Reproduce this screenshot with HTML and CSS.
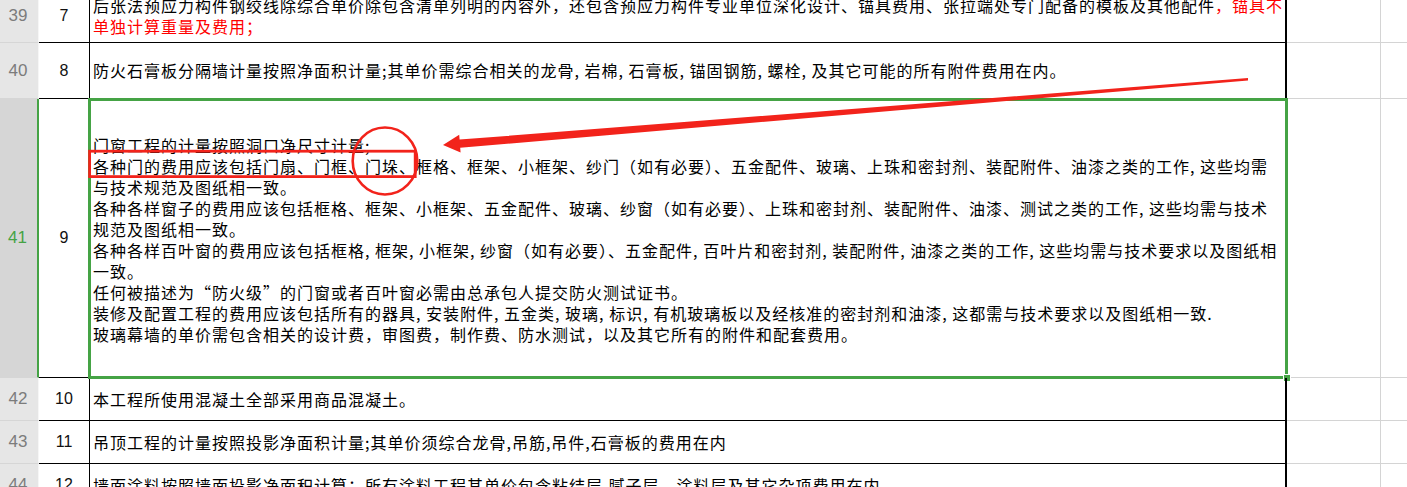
FILE: index.html
```html
<!DOCTYPE html>
<html lang="zh-CN">
<head>
<meta charset="utf-8">
<title>Sheet</title>
<link rel="stylesheet" href="styles.css">
</head>
<body>
<div class="sheet">
  <div class="row r39">
    <div class="hdr">39</div>
    <div class="num">7</div>
    <div class="txt"><div class="lines">
      <div class="ln">后张法预应力构件钢绞线除综合单价除包含清单列明的内容外，还包含预应力构件专业单位深化设计、锚具费用、张拉端处专门配备的模板及其他配件<span class="red">，锚具不</span></div>
      <div class="ln red">单独计算重量及费用；</div>
    </div></div>
    <div class="c"></div><div class="d"></div>
  </div>
  <div class="row r40">
    <div class="hdr">40</div>
    <div class="num">8</div>
    <div class="txt"><div class="lines">
      <div class="ln">防火石膏板分隔墙计量按照净面积计量;其单价需综合相关的龙骨, 岩棉, 石膏板, 锚固钢筋, 螺栓, 及其它可能的所有附件费用在内。</div>
    </div></div>
    <div class="c"></div><div class="d"></div>
  </div>
  <div class="row r41">
    <div class="hdr sel-hdr">41</div>
    <div class="num">9</div>
    <div class="txt"><div class="lines">
      <div class="ln">门窗工程的计量按照洞口净尺寸计量;</div>
      <div class="ln">各种门的费用应该包括门扇、门框、门垛、框格、框架、小框架、纱门（如有必要）、五金配件、玻璃、上珠和密封剂、装配附件、油漆之类的工作, 这些均需</div>
      <div class="ln">与技术规范及图纸相一致。</div>
      <div class="ln">各种各样窗子的费用应该包括框格、框架、小框架、五金配件、玻璃、纱窗（如有必要）、上珠和密封剂、装配附件、油漆、测试之类的工作, 这些均需与技术</div>
      <div class="ln">规范及图纸相一致。</div>
      <div class="ln">各种各样百叶窗的费用应该包括框格, 框架, 小框架, 纱窗（如有必要）、五金配件, 百叶片和密封剂, 装配附件, 油漆之类的工作, 这些均需与技术要求以及图纸相</div>
      <div class="ln">一致。</div>
      <div class="ln">任何被描述为“防火级”的门窗或者百叶窗必需由总承包人提交防火测试证书。</div>
      <div class="ln">装修及配置工程的费用应该包括所有的器具, 安装附件, 五金类, 玻璃, 标识, 有机玻璃板以及经核准的密封剂和油漆, 这都需与技术要求以及图纸相一致.</div>
      <div class="ln">玻璃幕墙的单价需包含相关的设计费，审图费，制作费、防水测试，以及其它所有的附件和配套费用。</div>
    </div>
    <div class="selection"><span class="handle"></span></div>
    </div>
    <div class="c"></div><div class="d"></div>
  </div>
  <div class="row r42">
    <div class="hdr">42</div>
    <div class="num">10</div>
    <div class="txt"><div class="lines">
      <div class="ln">本工程所使用混凝土全部采用商品混凝土。</div>
    </div></div>
    <div class="c"></div><div class="d"></div>
  </div>
  <div class="row r43">
    <div class="hdr">43</div>
    <div class="num">11</div>
    <div class="txt"><div class="lines">
      <div class="ln">吊顶工程的计量按照投影净面积计量;其单价须综合龙骨,吊筋,吊件,石膏板的费用在内</div>
    </div></div>
    <div class="c"></div><div class="d"></div>
  </div>
  <div class="row r44">
    <div class="hdr">44</div>
    <div class="num">12</div>
    <div class="txt"><div class="lines">
      <div class="ln">墙面涂料按照墙面投影净面积计算；所有涂料工程其单价包含粘结层,腻子层，涂料层及其它杂项费用在内。</div>
    </div></div>
    <div class="c"></div><div class="d"></div>
  </div>
</div>
<svg class="marks" width="1407" height="487" viewBox="0 0 1407 487" xmlns="http://www.w3.org/2000/svg">
  <rect x="89.6" y="151.2" width="325.6" height="25.4" fill="none" stroke="#f2231b" stroke-width="2.8"/>
  <ellipse cx="385" cy="161" rx="32.3" ry="33.5" fill="none" stroke="#f2231b" stroke-width="2.6"/>
  <polygon points="1248,78 459.6,139.6 459.2,134.8 443,145 460.6,152.4 460.2,147.8 1248,80.4" fill="#f2231b"/>
</svg>
</body>
</html>
```
FILE: styles.css
```css
html, body {
  margin: 0;
  padding: 0;
}
body {
  width: 1407px;
  height: 487px;
  overflow: hidden;
  position: relative;
  background: #ffffff;
  font-family: "Noto Sans CJK SC", "Noto Sans", sans-serif;
  color: #000;
}
.sheet {
  margin-top: -10px;
}
.row {
  display: flex;
}
.row > div {
  box-sizing: border-box;
  flex: none;
}
.r39 { height: 53px; }
.r40 { height: 56px; }
.r41 { height: 279px; }
.r42, .r43, .r44 { height: 43px; }

.hdr {
  width: 39px;
  background: #e6e6e6;
  border-right: 1px solid #f6f6f6;
  border-bottom: 1px solid #d6d6d6;
  display: flex;
  align-items: center;
  justify-content: center;
  font-family: "Liberation Sans", Arial, sans-serif;
  font-size: 17px;
  color: #7c7c7c;
  padding-right: 2px;
}
.sel-hdr {
  background: #d6d6d6;
  border-right: 2px solid #45a345;
  color: #45a345;
}
.num {
  width: 51px;
  border-right: 1px solid #000;
  border-bottom: 1px solid #000;
  display: flex;
  align-items: center;
  justify-content: center;
  font-family: "Liberation Sans", Arial, sans-serif;
  font-size: 16px;
  color: #111;
}
.txt {
  width: 1197px;
  border-right: 2px solid #000;
  border-bottom: 1px solid #000;
  position: relative;
  display: flex;
  align-items: center;
  padding-left: 3px;
}
.lines {
  width: 100%;
  overflow: hidden;
  font-size: 16px;
  letter-spacing: 1px;
  line-height: 21px;
}
.ln {
  white-space: nowrap;
}
.r41 .lines {
  padding-top: 3px;
}
.red {
  color: #ff0000;
}
.c {
  width: 94px;
  border-right: 1px solid #d4d4d4;
  border-bottom: 1px solid #d4d4d4;
}
.row > .d {
  flex: 1;
  border-bottom: 1px solid #d4d4d4;
}
.selection {
  position: absolute;
  left: -2px;
  top: -1px;
  right: -3px;
  bottom: -2px;
  border: 3px solid #45a345;
  pointer-events: none;
}
.handle {
  position: absolute;
  right: -6px;
  bottom: -6px;
  width: 6px;
  height: 6px;
  background: #45a345;
  border: 1px solid #ffffff;
}
.marks {
  position: absolute;
  left: 0;
  top: 0;
  pointer-events: none;
}
```
